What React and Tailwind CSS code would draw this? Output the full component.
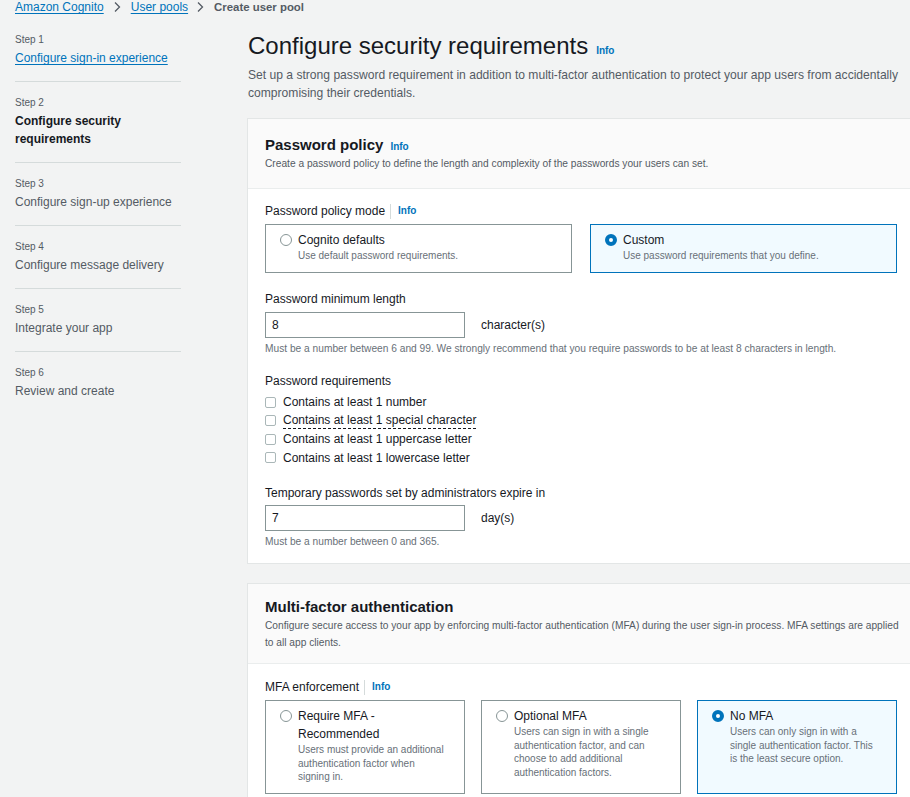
import React from "react";

function Chevron() {
  return (
    <svg width="10" height="12" viewBox="0 0 10 12" className="shrink-0">
      <polyline points="3,1.5 7.5,6 3,10.5" fill="none" stroke="#545b64" strokeWidth="1.3" />
    </svg>
  );
}

function Radio({ checked }) {
  return checked ? (
    <span className="mt-[3px] block h-[12px] w-[12px] shrink-0 rounded-full border-[4px] border-[#0073bb] bg-white" />
  ) : (
    <span className="mt-[3px] block h-[12px] w-[12px] shrink-0 rounded-full border border-[#879596] bg-white" />
  );
}

function Tile({ selected, title, desc, descLeading }) {
  return (
    <div
      className={
        selected
          ? "flex gap-[6px] border border-[#0073bb] bg-[#f1faff] pb-[9px] pl-[14px] pr-[10px] pt-[6px]"
          : "flex gap-[6px] border border-[#879596] bg-white pb-[9px] pl-[14px] pr-[10px] pt-[6px]"
      }
    >
      <Radio checked={selected} />
      <div className="min-w-0">
        <div className="whitespace-nowrap text-[12px] leading-[18px] text-[#16191f]">{title}</div>
        <div className={"whitespace-nowrap text-[10px] text-[#687078] " + descLeading}>{desc}</div>
      </div>
    </div>
  );
}

function Info({ className = "" }) {
  return <span className={"text-[10px] font-bold text-[#0073bb] " + className}>Info</span>;
}

function LabelInfo({ text }) {
  return (
    <div className="flex h-[18px] items-center text-[12px] leading-[18px] text-[#16191f]">
      <span>{text}</span>
      <span className="ml-[5px] mr-[7px] h-[15px] w-px bg-[#d5dbdb]" />
      <Info />
    </div>
  );
}

function Checkbox({ children }) {
  return (
    <div className="flex h-[18.5px] items-center gap-[7px] text-[12px] text-[#16191f]">
      <span className="block h-[11px] w-[11px] shrink-0 rounded-[2px] border border-[#aab7b8] bg-white" />
      {children}
    </div>
  );
}

function Step({ n, children, last }) {
  return (
    <div className={last ? "pb-[14px] pt-[13px]" : "border-b border-[#d5dbdb] pb-[14px] pt-[13px]"}>
      <div className="text-[10px] leading-[15px] text-[#545b64]">Step {n}</div>
      <div className="mt-[2px] text-[12px] leading-[18px]">{children}</div>
    </div>
  );
}

export default function App() {
  return (
    <div className="h-[797px] w-full overflow-hidden bg-[#f2f3f3] font-['Liberation_Sans',Arial,sans-serif] text-[#16191f]">
      <nav className="flex h-[14px] items-center pl-[15px] text-[12px] leading-[14px]">
        <a className="text-[#0073bb] underline decoration-1 underline-offset-2">Amazon Cognito</a>
        <span className="ml-[8px] mr-[9px] flex">
          <Chevron />
        </span>
        <a className="text-[#0073bb] underline decoration-1 underline-offset-2">User pools</a>
        <span className="ml-[7px] mr-[9px] flex">
          <Chevron />
        </span>
        <span className="text-[11.4px] font-bold text-[#545b64]">Create user pool</span>
      </nav>

      <div className="mt-[5px] flex">
        <aside className="ml-[15px] w-[166px] shrink-0">
          <Step n={1}>
            <a className="text-[#0073bb] underline decoration-1 underline-offset-2">Configure sign-in experience</a>
          </Step>
          <Step n={2}>
            <span className="font-bold text-[#16191f]">
              Configure security
              <br />
              requirements
            </span>
          </Step>
          <Step n={3}>
            <span className="text-[#545b64]">Configure sign-up experience</span>
          </Step>
          <Step n={4}>
            <span className="text-[#545b64]">Configure message delivery</span>
          </Step>
          <Step n={5}>
            <span className="text-[#545b64]">Integrate your app</span>
          </Step>
          <Step n={6} last>
            <span className="text-[#545b64]">Review and create</span>
          </Step>
        </aside>

        <main className="ml-[66px] w-[668px] shrink-0 pt-[12px]">
          <div className="flex items-baseline gap-[8px] pl-[1px]">
            <h1 className="text-[24px] font-normal leading-[30px] text-[#16191f]">Configure security requirements</h1>
            <Info />
          </div>
          <p className="mt-[5px] whitespace-nowrap pl-[1px] text-[12.1px] leading-[18px] text-[#545b64]">
            Set up a strong password requirement in addition to multi-factor authentication to protect your app users from accidentally
            <br />
            compromising their credentials.
          </p>

          {/* Password policy card */}
          <section className="mt-[16px] border border-[#e3e6e6] bg-white">
            <div className="border-b border-[#eaeded] bg-[#fafafa] px-[17px] pb-[16px] pt-[16px]">
              <div className="flex items-baseline gap-[7px]">
                <h2 className="text-[15px] font-bold leading-[20px] text-[#16191f]">Password policy</h2>
                <Info />
              </div>
              <p className="text-[10.2px] leading-[17px] text-[#545b64]">
                Create a password policy to define the length and complexity of the passwords your users can set.
              </p>
            </div>
            <div className="px-[17px] pb-[14px] pt-[13px]">
              <LabelInfo text="Password policy mode" />
              <div className="mt-[4px] grid w-[632px] grid-cols-2 gap-[18px]">
                <Tile title="Cognito defaults" desc="Use default password requirements." descLeading="leading-[14px]" />
                <Tile selected title="Custom" desc="Use password requirements that you define." descLeading="leading-[14px]" />
              </div>

              <div className="mt-[17px] text-[12px] leading-[18px]">Password minimum length</div>
              <div className="mt-[4px] flex items-center gap-[16px]">
                <input
                  readOnly
                  value="8"
                  className="h-[26px] w-[200px] border border-[#879596] bg-white px-[6px] text-[12px] text-[#16191f] outline-none"
                />
                <span className="text-[12px] text-[#16191f]">character(s)</span>
              </div>
              <p className="mt-[4px] whitespace-nowrap text-[10.2px] leading-[14px] text-[#687078]">
                Must be a number between 6 and 99. We strongly recommend that you require passwords to be at least 8 characters in length.
              </p>

              <div className="mt-[16px] text-[12px] leading-[18px]">Password requirements</div>
              <div className="mt-[3px]">
                <Checkbox>Contains at least 1 number</Checkbox>
                <Checkbox>
                  <span className="inline-block border-b border-dashed border-[#16191f] leading-[16px]">
                    Contains at least 1 special character
                  </span>
                </Checkbox>
                <Checkbox>Contains at least 1 uppercase letter</Checkbox>
                <Checkbox>Contains at least 1 lowercase letter</Checkbox>
              </div>

              <div className="mt-[17px] text-[12px] leading-[18px]">Temporary passwords set by administrators expire in</div>
              <div className="mt-[3px] flex items-center gap-[16px]">
                <input
                  readOnly
                  value="7"
                  className="h-[26px] w-[200px] border border-[#879596] bg-white px-[6px] text-[12px] text-[#16191f] outline-none"
                />
                <span className="text-[12px] text-[#16191f]">day(s)</span>
              </div>
              <p className="mt-[4px] text-[10.2px] leading-[14px] text-[#687078]">Must be a number between 0 and 365.</p>
            </div>
          </section>

          {/* MFA card */}
          <section className="mt-[19px] border border-[#e3e6e6] bg-white">
            <div className="border-b border-[#eaeded] bg-[#fafafa] px-[17px] pb-[12px] pt-[13px]">
              <h2 className="text-[15px] font-bold leading-[20px] text-[#16191f]">Multi-factor authentication</h2>
              <p className="whitespace-nowrap text-[10.2px] leading-[17px] text-[#545b64]">
                Configure secure access to your app by enforcing multi-factor authentication (MFA) during the user sign-in process. MFA settings are applied
                <br />
                to all app clients.
              </p>
            </div>
            <div className="px-[17px] pb-[14px] pt-[14px]">
              <LabelInfo text="MFA enforcement" />
              <div className="mt-[4px] grid w-[632px] grid-cols-3 gap-[16px]">
                <Tile
                  title={
                    <>
                      Require MFA -
                      <br />
                      Recommended
                    </>
                  }
                  desc={
                    <>
                      Users must provide an additional
                      <br />
                      authentication factor when
                      <br />
                      signing in.
                    </>
                  }
                  descLeading="leading-[13.5px]"
                />
                <Tile
                  title="Optional MFA"
                  desc={
                    <>
                      Users can sign in with a single
                      <br />
                      authentication factor, and can
                      <br />
                      choose to add additional
                      <br />
                      authentication factors.
                    </>
                  }
                  descLeading="leading-[13.5px]"
                />
                <Tile
                  selected
                  title="No MFA"
                  desc={
                    <>
                      Users can only sign in with a
                      <br />
                      single authentication factor. This
                      <br />
                      is the least secure option.
                    </>
                  }
                  descLeading="leading-[13.5px]"
                />
              </div>
            </div>
          </section>
        </main>
      </div>
    </div>
  );
}
